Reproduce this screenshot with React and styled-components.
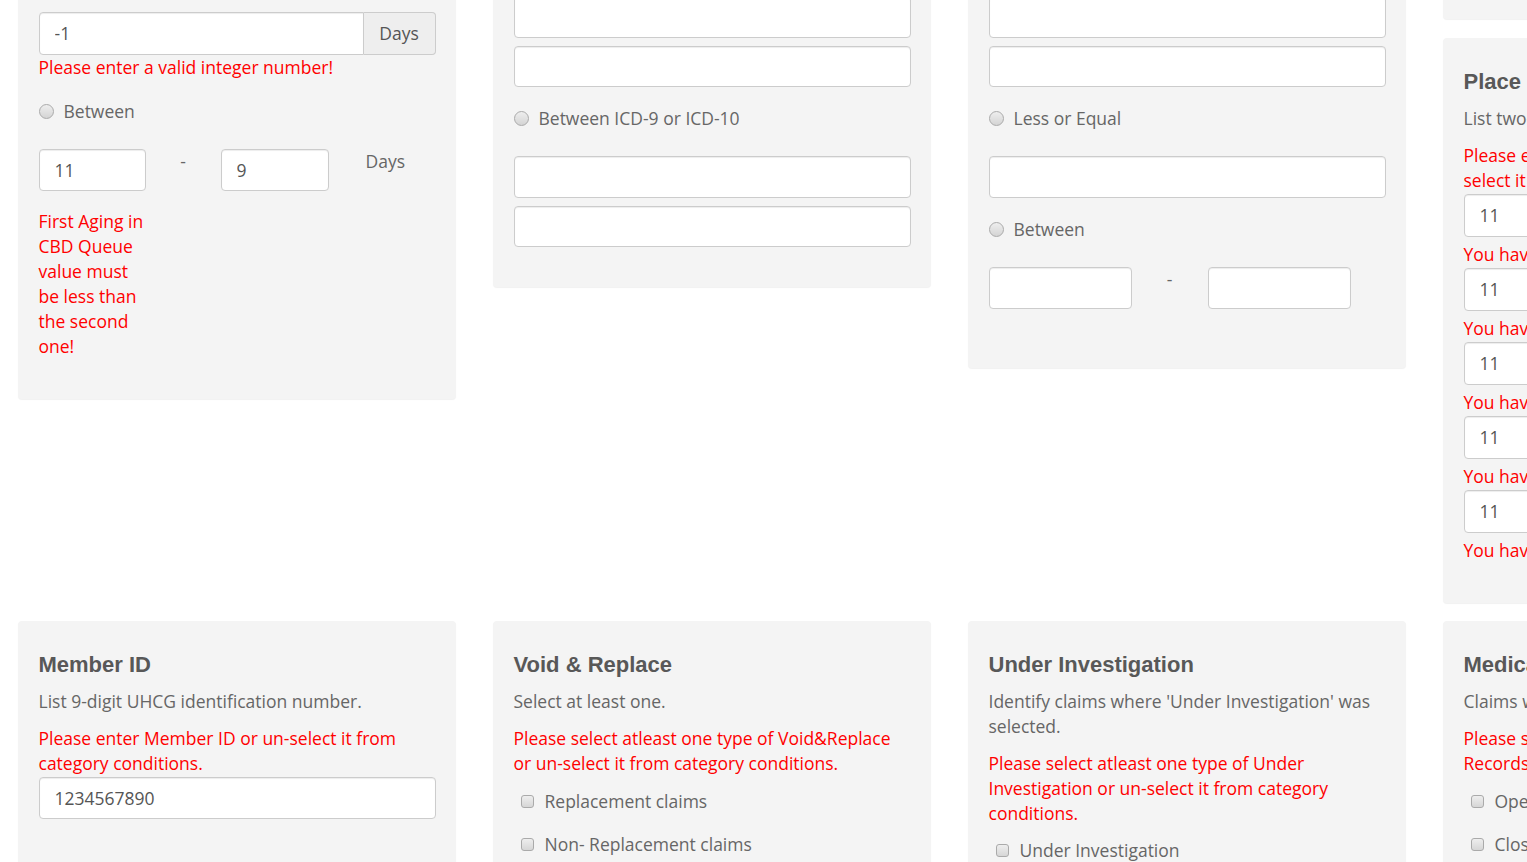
import React from "react";
import styled, { createGlobalStyle } from "styled-components";

const GlobalStyle = createGlobalStyle`
  html, body {
    margin: 0;
    padding: 0;
    background: #fff;
    overflow: hidden;
  }
  body {
    font-family: "Open Sans", "Liberation Sans", sans-serif;
    font-size: 17.5px;
    line-height: 25px;
    color: #666;
  }
`;

const Page = styled.div`
  margin-top: -30px;
  padding-left: 18px;
  width: 1900px;
`;

const Row = styled.div`
  display: grid;
  grid-template-columns: repeat(4, 438px);
  column-gap: 37px;
  align-items: ${(p) => (p.$stretch ? "stretch" : "start")};
  margin-top: ${(p) => p.$mt || 0}px;
`;

const Stack = styled.div`
  display: flex;
  flex-direction: column;
  gap: 19px;
`;

const Card = styled.section`
  box-sizing: border-box;
  background: #f4f4f4;
  border-radius: 4px;
  box-shadow: 0 1px 1px rgba(0, 0, 0, 0.06);
  padding: ${(p) => p.$pt ?? 20}px 20.5px ${(p) => p.$pb ?? 40}px;
  min-height: ${(p) => (p.$h ? `${p.$h}px` : "0")};
`;

const Title = styled.h3`
  margin: 12px 0;
  font-family: "Liberation Sans", Arial, sans-serif;
  font-weight: bold;
  font-size: 22px;
  line-height: 24px;
  color: #585858;
`;

const Description = styled.p`
  margin: 0 0 12px;
`;

const Error = styled.div`
  color: #ff0000;
  margin: ${(p) => p.$m || "0"};
`;

const TextInput = styled.input`
  display: block;
  box-sizing: border-box;
  width: 100%;
  height: ${(p) => p.$h || 42.5}px;
  margin: ${(p) => p.$m || "0"};
  padding: 0 15px;
  font: inherit;
  color: #555;
  background: #fff;
  border: 1px solid #ccc;
  border-radius: ${(p) => (p.$grouped ? "4px 0 0 4px" : "4px")};
  box-shadow: inset 0 1px 1px rgba(0, 0, 0, 0.075);
  outline: none;
`;

const InputGroup = styled.div`
  display: flex;
`;

const Addon = styled.span`
  box-sizing: border-box;
  flex: 0 0 72px;
  height: 42.5px;
  display: flex;
  align-items: center;
  justify-content: center;
  background: #eee;
  color: #555;
  border: 1px solid #ccc;
  border-left: 0;
  border-radius: 0 4px 4px 0;
`;

const InputStack = styled.div`
  display: flex;
  flex-direction: column;
  gap: 8px;
`;

const RadioRow = styled.label`
  display: flex;
  align-items: center;
  gap: 10px;
  height: 25px;
  margin: 19px 0 25px;
`;

const Radio = styled.input.attrs({ type: "radio" })`
  appearance: none;
  margin: 0;
  width: 15px;
  height: 15px;
  border-radius: 50%;
  border: 1px solid #aaa;
  background: linear-gradient(#eee, #d4d4d4);
  box-sizing: border-box;
`;

const CheckList = styled.div`
  display: flex;
  flex-direction: column;
  gap: 18px;
  margin-top: ${(p) => p.$mt ?? 13}px;
`;

const CheckRow = styled.label`
  display: flex;
  align-items: center;
  gap: 11px;
  height: 25px;
  padding-left: 7px;
`;

const Checkbox = styled.input.attrs({ type: "checkbox" })`
  appearance: none;
  margin: 0;
  width: 13px;
  height: 13px;
  border-radius: 3px;
  border: 1px solid #aaa;
  background: linear-gradient(#eee, #d6d6d6);
  box-sizing: border-box;
`;

const RangeRow = styled.div`
  display: grid;
  grid-template-columns: ${(p) => p.$cols};
  align-items: start;
  margin-top: ${(p) => p.$mt || 0}px;
`;

const Dash = styled.span`
  text-align: center;
  line-height: 25px;
`;

const Unit = styled.span`
  padding-left: 37px;
`;

const RangeError = styled(Error)`
  grid-column: 1;
  margin-top: 18px;
`;

const codes = ["11", "11", "11", "11", "11"];

export default function App() {
  return (
    <>
      <GlobalStyle />
      <Page>
        <Row>
          <Card $pt={42}>
            <InputGroup>
              <TextInput $grouped defaultValue="-1" />
              <Addon>Days</Addon>
            </InputGroup>
            <Error>Please enter a valid integer number!</Error>
            <RadioRow>
              <Radio name="aging" />
              Between
            </RadioRow>
            <RangeRow $cols="107px 75px 108px 1fr">
              <TextInput defaultValue="11" />
              <Dash>-</Dash>
              <TextInput defaultValue="9" />
              <Unit>Days</Unit>
              <RangeError>
                First Aging in CBD Queue value must be less than the second one!
              </RangeError>
            </RangeRow>
          </Card>

          <Card $pt={26}>
            <InputStack>
              <TextInput $h={41.5} />
              <TextInput $h={41.5} />
            </InputStack>
            <RadioRow>
              <Radio name="icd" />
              Between ICD-9 or ICD-10
            </RadioRow>
            <InputStack>
              <TextInput $h={41.5} />
              <TextInput $h={41.5} />
            </InputStack>
          </Card>

          <Card $pt={26} $pb={59}>
            <InputStack>
              <TextInput $h={41.5} />
              <TextInput $h={41.5} />
            </InputStack>
            <RadioRow>
              <Radio name="amount" />
              Less or Equal
            </RadioRow>
            <TextInput $h={41.5} />
            <RadioRow>
              <Radio name="amount" />
              Between
            </RadioRow>
            <RangeRow $cols="143px 76px 143px" $mt={1}>
              <TextInput $h={42} />
              <Dash>-</Dash>
              <TextInput $h={42} />
            </RangeRow>
          </Card>

          <Stack>
            <Card $h={49} $pt={0} $pb={0} />
            <Card>
              <Title>Place of Service</Title>
              <Description>List two-digit place of service codes.</Description>
              <Error>
                Please enter Place of Service code or un-
                <br />
                select it from category conditions.
              </Error>
              {codes.map((c, i) => (
                <div key={i}>
                  <TextInput defaultValue={c} $m={i === 0 ? "1px 0 0" : "1.5px 0 0"} />
                  <Error $m="5px 0 0">You have entered an invalid code!</Error>
                </div>
              ))}
            </Card>
          </Stack>
        </Row>

        <Row $mt={18} $stretch>
          <Card>
            <Title>Member ID</Title>
            <Description>List 9-digit UHCG identification number.</Description>
            <Error>
              Please enter Member ID or un-select it from category conditions.
            </Error>
            <TextInput defaultValue="1234567890" $m="1px 0 0" />
          </Card>

          <Card>
            <Title>Void &amp; Replace</Title>
            <Description>Select at least one.</Description>
            <Error>
              Please select atleast one type of Void&amp;Replace or un-select it
              from category conditions.
            </Error>
            <CheckList>
              <CheckRow>
                <Checkbox />
                Replacement claims
              </CheckRow>
              <CheckRow>
                <Checkbox />
                Non- Replacement claims
              </CheckRow>
            </CheckList>
          </Card>

          <Card>
            <Title>Under Investigation</Title>
            <Description>
              Identify claims where 'Under Investigation' was selected.
            </Description>
            <Error>
              Please select atleast one type of Under Investigation or un-select it
              from category conditions.
            </Error>
            <CheckList $mt={12}>
              <CheckRow>
                <Checkbox />
                Under Investigation
              </CheckRow>
              <CheckRow>
                <Checkbox />
                Not Under Investigation
              </CheckRow>
            </CheckList>
          </Card>

          <Card>
            <Title>Medical Records</Title>
            <Description>Claims with Medical Records requested.</Description>
            <Error>
              Please select atleast one type of Medical
              <br />
              Records or un-select it from category conditions.
            </Error>
            <CheckList>
              <CheckRow>
                <Checkbox />
                Open
              </CheckRow>
              <CheckRow>
                <Checkbox />
                Closed
              </CheckRow>
            </CheckList>
          </Card>
        </Row>
      </Page>
    </>
  );
}
